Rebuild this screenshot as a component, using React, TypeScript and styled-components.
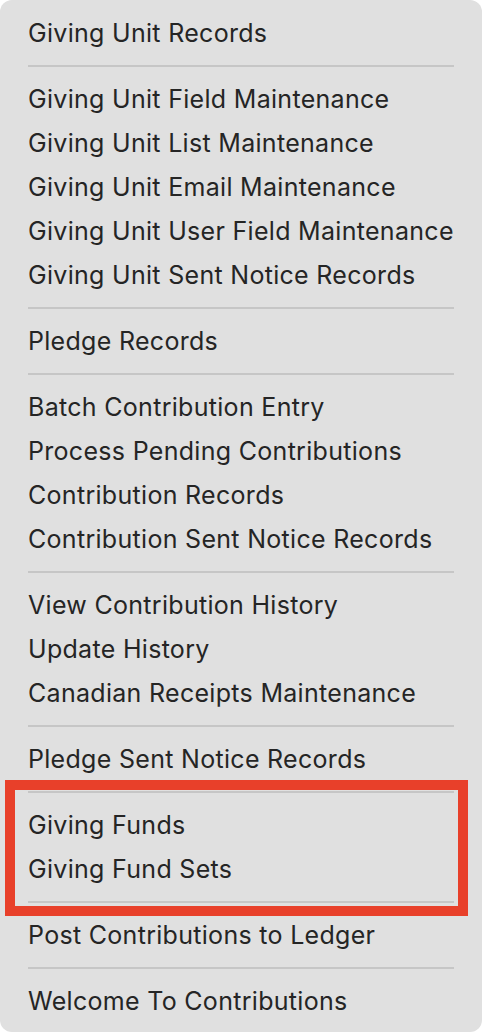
import styled, { createGlobalStyle } from "styled-components";

const GlobalStyle = createGlobalStyle`
  html, body {
    margin: 0;
    padding: 0;
    background: #ffffff;
  }
`;

const Menu = styled.div`
  width: 482px;
  height: 1032px;
  box-sizing: border-box;
  padding: 11px 0 9px;
  background: #e0e0e0;
  border-radius: 12px;
  display: flex;
  flex-direction: column;
  font-family: Inter, "Noto Sans", sans-serif;
`;

const Item = styled.div`
  height: 44px;
  display: flex;
  align-items: center;
  padding-left: 28px;
  padding-bottom: 1px;
  box-sizing: border-box;
  font-size: 25px;
  letter-spacing: 0.3px;
  color: #252525;
  white-space: nowrap;
`;

const Separator = styled.div`
  height: 22px;
  display: flex;
  align-items: center;
  padding: 0 28px;

  &::after {
    content: "";
    flex: 1;
    height: 2px;
    background: #c6c6c6;
  }
`;

const Highlight = styled.div`
  position: relative;
  display: flex;
  flex-direction: column;
`;

const HighlightFrame = styled.div`
  position: absolute;
  top: -1px;
  bottom: -3px;
  left: 5px;
  right: 14px;
  border: 10px solid #e8402a;
  pointer-events: none;
`;

const groups: string[][] = [
  ["Giving Unit Records"],
  [
    "Giving Unit Field Maintenance",
    "Giving Unit List Maintenance",
    "Giving Unit Email Maintenance",
    "Giving Unit User Field Maintenance",
    "Giving Unit Sent Notice Records",
  ],
  ["Pledge Records"],
  [
    "Batch Contribution Entry",
    "Process Pending Contributions",
    "Contribution Records",
    "Contribution Sent Notice Records",
  ],
  ["View Contribution History", "Update History", "Canadian Receipts Maintenance"],
  ["Pledge Sent Notice Records"],
];

function App() {
  return (
    <>
      <GlobalStyle />
      <Menu>
        {groups.map((group, i) => (
          <div key={i}>
            {i > 0 && <Separator />}
            {group.map((label) => (
              <Item key={label}>{label}</Item>
            ))}
          </div>
        ))}
        <Highlight>
          <Separator />
          <Item>Giving Funds</Item>
          <Item>Giving Fund Sets</Item>
          <Separator />
          <HighlightFrame />
        </Highlight>
        <Item>Post Contributions to Ledger</Item>
        <Separator />
        <Item>Welcome To Contributions</Item>
      </Menu>
    </>
  );
}

export default App;
